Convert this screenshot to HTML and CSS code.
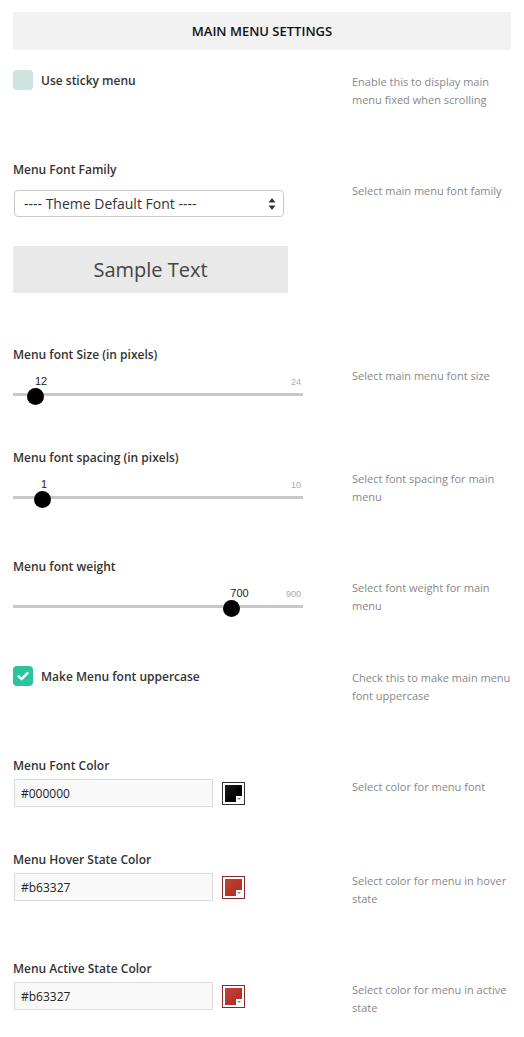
FILE: index.html
```html
<!DOCTYPE html>
<html>
<head>
<meta charset="utf-8">
<link rel="stylesheet" href="styles.css">
</head>
<body>
<div class="page">
  <div class="header">MAIN MENU SETTINGS</div>

  <div class="row row-check">
    <div class="main">
      <div class="check-line">
        <span class="checkbox"></span>
        <span class="label">Use sticky menu</span>
      </div>
    </div>
    <div class="desc">Enable this to display main menu fixed when scrolling</div>
  </div>

  <div class="row">
    <div class="main">
      <div class="label">Menu Font Family</div>
      <div class="select">
        <span>---- Theme Default Font ----</span>
        <svg class="arrows" width="8" height="14" viewBox="0 0 8 14"><path d="M4 1 L7.5 5.5 L0.5 5.5 Z M4 13 L7.5 8.5 L0.5 8.5 Z" fill="#333"/></svg>
      </div>
      <div class="sample">Sample Text</div>
    </div>
    <div class="desc">Select main menu font family</div>
  </div>

  <div class="row">
    <div class="main">
      <div class="label">Menu font Size (in pixels)</div>
      <div class="slider">
        <div class="slider-values">
          <span class="slider-value" style="left:9.7%">12</span>
          <span class="slider-max">24</span>
        </div>
        <div class="slider-track">
          <div class="track-line"></div>
          <div class="thumb" style="left:7.9%"></div>
        </div>
      </div>
    </div>
    <div class="desc">Select main menu font size</div>
  </div>

  <div class="row">
    <div class="main">
      <div class="label">Menu font spacing (in pixels)</div>
      <div class="slider">
        <div class="slider-values">
          <span class="slider-value" style="left:10.7%">1</span>
          <span class="slider-max">10</span>
        </div>
        <div class="slider-track">
          <div class="track-line"></div>
          <div class="thumb" style="left:10.3%"></div>
        </div>
      </div>
    </div>
    <div class="desc">Select font spacing for main menu</div>
  </div>

  <div class="row">
    <div class="main">
      <div class="label">Menu font weight</div>
      <div class="slider">
        <div class="slider-values">
          <span class="slider-value" style="left:78.1%">700</span>
          <span class="slider-max">900</span>
        </div>
        <div class="slider-track">
          <div class="track-line"></div>
          <div class="thumb" style="left:75.5%"></div>
        </div>
      </div>
    </div>
    <div class="desc">Select font weight for main menu</div>
  </div>

  <div class="row row-check">
    <div class="main">
      <div class="check-line">
        <span class="checkbox checked">
          <svg width="20" height="20" viewBox="0 0 20 20"><path d="M5.5 10.2 L8.6 13.2 L14.5 7.2" fill="none" stroke="#fff" stroke-width="2.4" stroke-linecap="round" stroke-linejoin="round"/></svg>
        </span>
        <span class="label">Make Menu font uppercase</span>
      </div>
    </div>
    <div class="desc">Check this to make main menu font uppercase</div>
  </div>

  <div class="row">
    <div class="main">
      <div class="label">Menu Font Color</div>
      <div class="color-line">
        <div class="color-input">#000000</div>
        <span class="swatch swatch-black"><span class="swatch-fill"></span><span class="swatch-tab"></span></span>
      </div>
    </div>
    <div class="desc">Select color for menu font</div>
  </div>

  <div class="row">
    <div class="main">
      <div class="label">Menu Hover State Color</div>
      <div class="color-line">
        <div class="color-input">#b63327</div>
        <span class="swatch swatch-red"><span class="swatch-fill"></span><span class="swatch-tab"></span></span>
      </div>
    </div>
    <div class="desc">Select color for menu in hover state</div>
  </div>

  <div class="row">
    <div class="main">
      <div class="label">Menu Active State Color</div>
      <div class="color-line">
        <div class="color-input">#b63327</div>
        <span class="swatch swatch-red"><span class="swatch-fill"></span><span class="swatch-tab"></span></span>
      </div>
    </div>
    <div class="desc">Select color for menu in active state</div>
  </div>
</div>
</body>
</html>
```
FILE: styles.css
```css
body {
  margin: 0;
  background: #fff;
  font-family: "Open Sans", "Noto Sans", sans-serif;
}
.page {
  width: 498px;
  padding: 12px 13px 0;
}
.header {
  height: 38px;
  background: #f2f2f2;
  display: flex;
  align-items: center;
  justify-content: center;
  font-size: 13px;
  font-weight: 600;
  color: #111;
  margin-bottom: 20px;
}
.row {
  display: flex;
  align-items: flex-start;
}
.main {
  width: 339px;
  padding-bottom: 43px;
}
.desc {
  width: 159px;
  padding-top: 22px;
  padding-bottom: 51px;
  font-size: 11px;
  line-height: 18px;
  color: #888;
}
.row-check .desc {
  padding-top: 3px;
}
.label {
  font-size: 12px;
  font-weight: 600;
  line-height: 18px;
  padding-top: 1px;
  color: #333;
}
.check-line {
  display: flex;
  align-items: center;
  gap: 8px;
  height: 20px;
}
.check-line .label {
  padding-top: 2px;
}
.checkbox {
  width: 20px;
  height: 20px;
  border-radius: 4px;
  background: #cee5df;
  display: block;
}
.checkbox.checked {
  background: #2bc49c;
}
.checkbox svg {
  display: block;
}
.select {
  margin: 11px 0 0 1px;
  width: 270px;
  height: 27px;
  box-sizing: border-box;
  border: 1px solid #c9c9c9;
  border-radius: 4px;
  display: flex;
  align-items: center;
  justify-content: space-between;
  padding: 0 7px 0 9px;
  font-size: 14px;
  color: #333;
}
.arrows {
  display: block;
}
.sample {
  margin-top: 29px;
  margin-bottom: 9px;
  width: 275px;
  height: 47px;
  background: #e9e9e9;
  display: flex;
  align-items: center;
  justify-content: center;
  font-size: 20px;
  color: #444;
}
.slider {
  margin-top: 9px;
  width: 290px;
}
.slider-values {
  position: relative;
  height: 16px;
  font-family: "Liberation Sans", Arial, sans-serif;
}
.slider-value {
  position: absolute;
  top: 0;
  transform: translateX(-50%);
  font-size: 11px;
  line-height: 16px;
  color: #222;
}
.slider-max {
  position: absolute;
  right: 2px;
  top: 1px;
  font-size: 9px;
  line-height: 16px;
  color: #aaa;
}
.slider-track {
  position: relative;
  height: 16px;
}
.track-line {
  position: absolute;
  left: 0;
  right: 0;
  top: 4px;
  height: 3px;
  background: #c8c8c8;
}
.thumb {
  position: absolute;
  top: -1px;
  width: 17px;
  height: 17px;
  margin-left: -8.5px;
  border-radius: 50%;
  background: #000;
}
.color-line {
  display: flex;
  align-items: center;
  gap: 9px;
  margin-top: 4px;
}
.color-input {
  margin-left: 1px;
  width: 199px;
  height: 28px;
  box-sizing: border-box;
  border: 1px solid #dcdcdc;
  background: #f9f9f9;
  padding-left: 6px;
  display: flex;
  align-items: center;
  font-size: 12px;
  color: #222;
}
.swatch {
  position: relative;
  display: block;
  width: 23px;
  height: 23px;
  box-sizing: border-box;
  padding: 2px;
  background: #fff;
  border: 1px solid #333;
}
.swatch-fill {
  display: block;
  width: 100%;
  height: 100%;
}
.swatch-black .swatch-fill {
  background: linear-gradient(135deg, #222 0%, #000 60%);
}
.swatch-red {
  border-color: #8c2a21;
}
.swatch-red .swatch-fill {
  background: linear-gradient(135deg, #c2443a 0%, #b63327 60%);
}
.swatch-tab {
  position: absolute;
  right: 2px;
  bottom: 2px;
  width: 6px;
  height: 6px;
  background: #fff;
}
.swatch-tab::after {
  content: "";
  position: absolute;
  left: 1px;
  top: 2px;
  border-left: 2px solid transparent;
  border-right: 2px solid transparent;
  border-top: 2px solid #888;
}
```
